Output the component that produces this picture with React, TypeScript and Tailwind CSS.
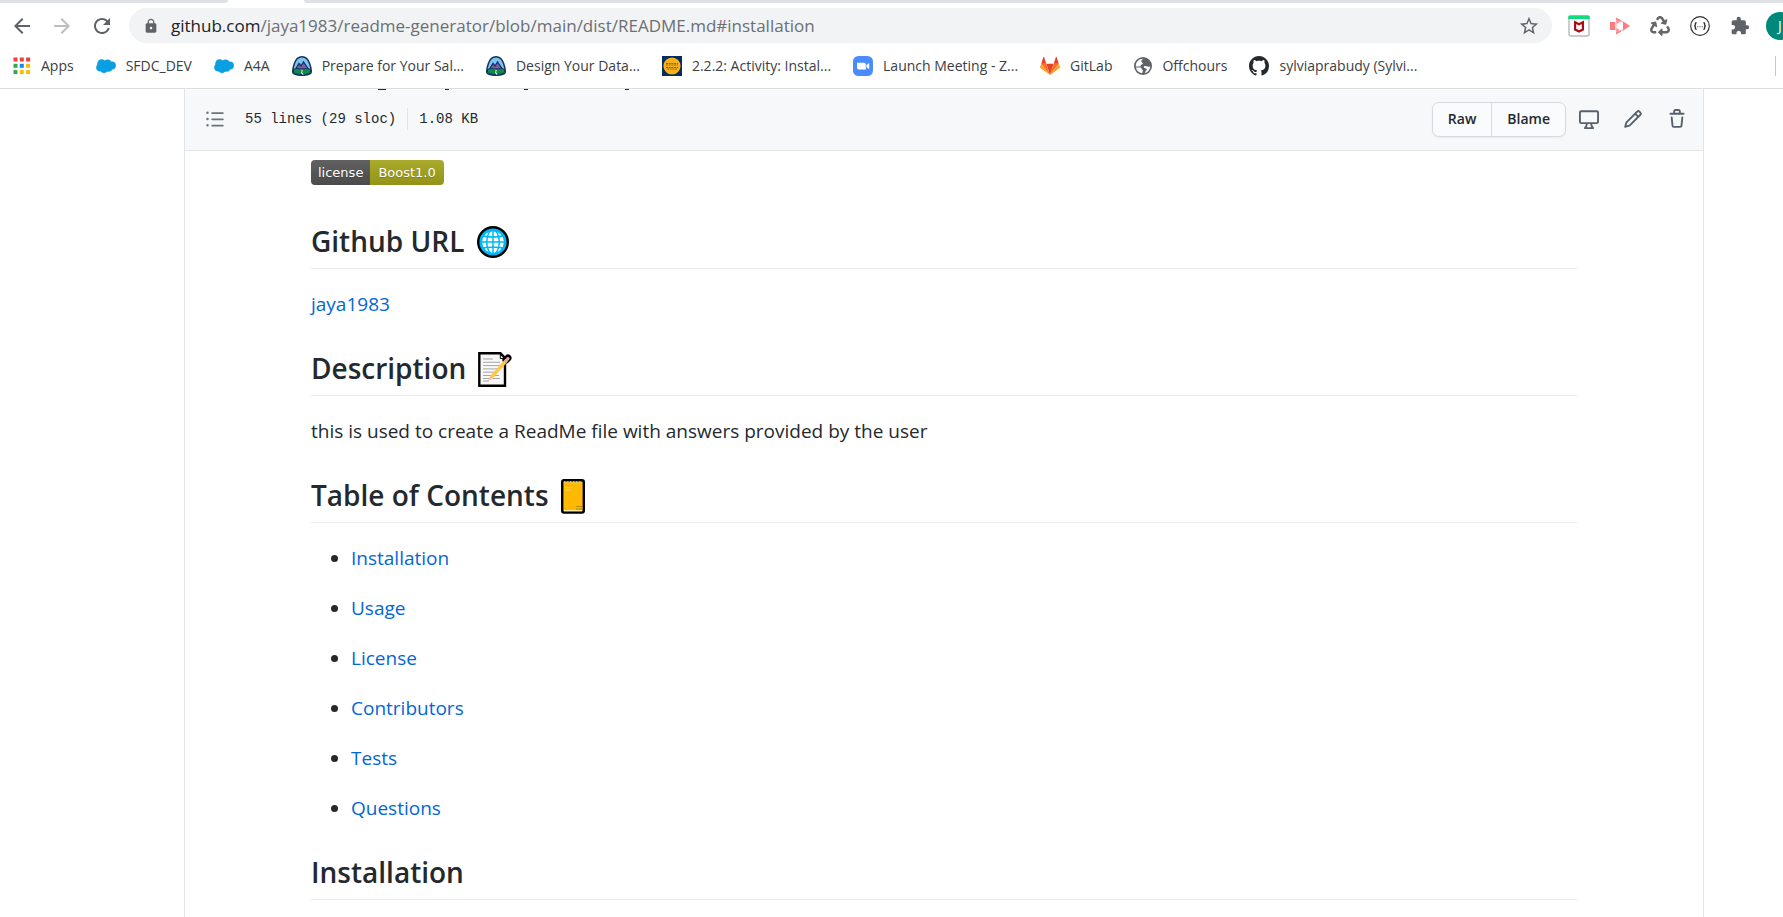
import type { ReactNode } from "react";
import {
  MdArrowBack,
  MdArrowForward,
  MdExtension,
  MdLock,
  MdRefresh,
  MdStarBorder,
} from "react-icons/md";
import { FaRecycle } from "react-icons/fa";

/* ---------- bookmark icons ---------- */

function AppsIcon() {
  const colors = ["#ea4335", "#ea4335", "#ea4335", "#34a853", "#1a86f0", "#fbbc04", "#34a853", "#fbbc04", "#fbbc04"];
  return (
    <svg className="size-[18px]" viewBox="0 0 18 18" aria-hidden="true">
      {colors.map((c, i) => (
        <rect key={i} x={0.5 + (i % 3) * 6.3} y={0.5 + Math.floor(i / 3) * 6.3} width="4" height="4" fill={c} />
      ))}
    </svg>
  );
}

function CloudIcon() {
  return (
    <svg className="size-5" viewBox="0 0 20 20" aria-hidden="true">
      <g fill="#0a9fe0">
        <circle cx="5.6" cy="7.6" r="4.3" />
        <circle cx="4" cy="11.6" r="3.8" />
        <circle cx="11.6" cy="7.4" r="3.8" />
        <circle cx="15.8" cy="9.6" r="4.1" />
        <circle cx="12.4" cy="12" r="3.8" />
        <circle cx="8" cy="12.8" r="4.2" />
      </g>
    </svg>
  );
}

function TrailheadIcon() {
  return (
    <svg className="size-5" viewBox="0 0 20 20" aria-hidden="true">
      <path
        d="M10 .8C14 .8 16.400 4 17.600 7.600 18.500 10.200 19.500 13.500 19.200 16.200 18.900 18.300 14.500 19.300 10 19.300S1.100 18.300.8 16.200C.5 13.500 1.500 10.200 2.400 7.600 3.600 4 6 .8 10 .8z"
        fill="#7cc4f2"
        stroke="#16325c"
        strokeWidth="1.500"
      />
      <path d="M3 14l4-6.500 2 2.500 2.500-4L17 14z" fill="#7e5aa8" stroke="#16325c" strokeWidth="1.300" />
      <path d="M1.500 13.500c3-1.800 5-.6 8.500-.6s5.500-1.200 8.500.6v3c-1.500 1.500-5 2-8.500 2s-7-.5-8.500-2z" fill="#0f8a4d" stroke="#16325c" strokeWidth="1" />
      <path d="M8.500 13.200l2.600 1.500-1.300 1.300 2 2.600H10l-1-2.600 1-1z" fill="#fff" />
    </svg>
  );
}

function ActivityIcon() {
  return (
    <svg className="size-5" viewBox="0 0 20 20" aria-hidden="true">
      <rect width="20" height="20" fill="#062b60" />
      <circle cx="10" cy="10" r="8.600" fill="#fbb216" />
      <path d="M4 7.500h12M4 9h12M4 11.500h12M5 13h10" stroke="#8a6420" strokeWidth="1" strokeDasharray="2 .7" />
    </svg>
  );
}

function ZoomIcon() {
  return (
    <svg className="size-5" viewBox="0 0 20 20" aria-hidden="true">
      <rect width="20" height="20" rx="5.500" fill="#4a8cff" />
      <path d="M4 6.800h7a1.800 1.800 0 0 1 1.800 1.800v4.900h-7A1.800 1.800 0 0 1 4 11.700zM13.400 9l2.800-2.100v6.300L13.400 11.200z" fill="#fff" />
    </svg>
  );
}

function GitLabIcon() {
  return (
    <svg className="size-5" viewBox="0 0 20 20" aria-hidden="true">
      <path d="M10 19l3.700-11.300H6.300z" fill="#e24329" />
      <path d="M10 19L6.300 7.700H1.200z" fill="#fc6d26" />
      <path d="M1.200 7.700L.1 11.100a.8.8 0 0 0 .3.900L10 19z" fill="#fca326" />
      <path d="M1.200 7.700h5.100L4.100 1a.4.4 0 0 0-.7 0z" fill="#e24329" />
      <path d="M10 19l3.700-11.300h5.100z" fill="#fc6d26" />
      <path d="M18.800 7.700l1.100 3.400a.8.8 0 0 1-.3.900L10 19z" fill="#fca326" />
      <path d="M18.800 7.700h-5.100L15.900 1a.4.4 0 0 1 .7 0z" fill="#e24329" />
    </svg>
  );
}

function GlobeIcon() {
  return (
    <svg className="size-[18px]" viewBox="0 0 18 18" aria-hidden="true">
      <circle cx="9" cy="9" r="9" fill="#5f6368" />
      <path
        d="M9.500 1.800C8.300 2.300 7.200 3.100 7.300 4.300c.1 1.200 1.600 1.300 1.500 2.300-.1 1-1.200.9-1.900 1.300-.4.300-.6.900-.5 1.500H1.800C1.600 5 4.900 1.500 9.500 1.800zM2 10.600h4.300c.9 0 1.300.6 1.300 1.300 0 .8 1 .7 1.300 1.200.3.600-.1 1.200-.5 1.600v1.400C5.200 16.200 2.500 13.700 2 10.600zM16.200 9.400c-1.200 0-1.600.5-2.600.2-1-.3-1.600-.9-2.800-.6-1 .3-1.300 1.400-.4 2 .8.500 2.200.3 2.400 1.300.2 1.200-1.300 1.600-1.600 2.500l-.3 1.200c2.900-.8 5.200-3.400 5.300-6.600z"
        fill="#fff"
      />
    </svg>
  );
}

function GitHubIcon() {
  return (
    <svg className="size-5" viewBox="0 0 16 16" fill="#24292e" aria-hidden="true">
      <path d="M8 0C3.580 0 0 3.580 0 8c0 3.540 2.290 6.530 5.470 7.590.4.070.55-.17.55-.38 0-.19-.01-.82-.01-1.490-2.010.37-2.530-.49-2.690-.94-.09-.23-.48-.94-.82-1.130-.28-.15-.68-.52-.01-.53.63-.01 1.080.58 1.230.82.72 1.210 1.870.87 2.330.66.070-.52.28-.87.51-1.070-1.780-.2-3.640-.89-3.640-3.950 0-.87.31-1.590.82-2.150-.08-.2-.36-1.020.08-2.120 0 0 .67-.21 2.200.82.64-.18 1.320-.27 2-.27.68 0 1.360.09 2 .27 1.530-1.040 2.200-.82 2.200-.82.44 1.100.16 1.920.08 2.120.51.56.82 1.270.82 2.150 0 3.070-1.870 3.750-3.650 3.950.29.25.54.73.54 1.480 0 1.070-.01 1.930-.01 2.200 0 .21.15.46.55.38A8.013 8.013 0 0 0 16 8c0-4.420-3.580-8-8-8z" />
    </svg>
  );
}

/* ---------- extension icons ---------- */

function ShieldExtIcon() {
  return (
    <svg className="size-[22px]" viewBox="0 0 22 22" aria-hidden="true">
      <rect x="1" y="1" width="20" height="20" rx="2" fill="#fff" stroke="#b9b9b9" strokeWidth="1.400" />
      <path d="M.3 1.500A1.200 1.200 0 0 1 1.500.5h19a1.200 1.200 0 0 1 1.200 1V4H.3z" fill="#10dc7c" />
      <path d="M7.100 7.200l3.900 2 3.900-2v7.400L11 16.600l-3.900-2z" fill="none" stroke="#a80f14" strokeWidth="2.200" />
    </svg>
  );
}

function CastExtIcon() {
  return (
    <svg className="size-5" viewBox="0 0 20 18" aria-hidden="true">
      <rect x="0" y="5" width="5" height="8" fill="#fb7c80" />
      <path d="M6 .6l5.500 2.900L6.500 7zM6 17.400l5.500-2.900L6.500 11zM13 4.300L20 9l-7 4.700z" fill="#fb7c80" />
      <path d="M6 5v8M6.500 4L13 4.800M6.500 14l6.500-.8" stroke="#fdb5b7" strokeWidth="1.200" fill="none" />
    </svg>
  );
}

function BracesExtIcon() {
  return (
    <svg className="size-5" viewBox="0 0 20 20" fill="none" stroke="#333" aria-hidden="true">
      <circle cx="10" cy="10" r="9.300" strokeWidth="1.200" />
      <path d="M6.600 6.700c-1.400 0-1.200.8-1.200 1.800S5.200 10 4.200 10c1 0 1.200.5 1.200 1.500s-.2 1.800 1.200 1.800M13.400 6.700c1.400 0 1.200.8 1.200 1.800s.2 1.500 1.200 1.500c-1 0-1.200.5-1.200 1.500s.2 1.800-1.200 1.800" strokeWidth="1.400" />
      <path d="M7.300 10.800h5.400" strokeWidth="1" strokeDasharray="1 1.200" />
    </svg>
  );
}

/* ---------- file toolbar icons ---------- */

function Octicon({ d }: { d: string }) {
  return (
    <svg className="size-5" viewBox="0 0 16 16" fill="currentColor" aria-hidden="true">
      <path fillRule="evenodd" d={d} />
    </svg>
  );
}

const octicons = {
  list: "M2 4a1 1 0 100-2 1 1 0 000 2zm3.750-1.500a.75.75 0 000 1.500h8.500a.75.75 0 000-1.500h-8.500zm0 5a.75.75 0 000 1.500h8.500a.75.75 0 000-1.500h-8.500zm0 5a.75.75 0 000 1.500h8.500a.75.75 0 000-1.500h-8.500zM3 8a1 1 0 11-2 0 1 1 0 012 0zm-1 6a1 1 0 100-2 1 1 0 000 2z",
  desktop:
    "M1.750 2.500h12.500a.25.25 0 01.25.25v7.500a.25.25 0 01-.25.25H1.750a.25.25 0 01-.25-.25v-7.500a.25.25 0 01.25-.25zM14.250 1H1.750A1.750 1.750 0 000 2.750v7.500C0 11.216.784 12 1.750 12h3.727c-.1 1.041-.52 1.872-1.292 2.757A.75.75 0 004.750 16h6.500a.75.75 0 00.565-1.243c-.772-.885-1.193-1.716-1.292-2.757h3.727A1.750 1.750 0 0016 10.250v-7.500A1.750 1.750 0 0014.250 1zM9.018 12H6.982a5.720 5.720 0 01-.765 2.500h3.566a5.720 5.720 0 01-.765-2.500z",
  pencil:
    "M11.013 1.427a1.750 1.750 0 012.474 0l1.086 1.086a1.750 1.750 0 010 2.474l-8.610 8.610c-.21.21-.47.364-.756.445l-3.251.93a.75.75 0 01-.927-.928l.929-3.250a1.750 1.750 0 01.445-.758l8.610-8.610zm1.414 1.060a.25.25 0 00-.354 0L10.811 3.750l1.439 1.440 1.263-1.263a.25.25 0 000-.354l-1.086-1.086zM11.189 6.250L9.750 4.810l-6.286 6.287a.25.25 0 00-.064.108l-.558 1.953 1.953-.558a.249.249 0 00.108-.064l6.286-6.286z",
  trash:
    "M6.500 1.750a.25.25 0 01.25-.25h2.500a.25.25 0 01.25.25V3h-3V1.750zm4.500 0V3h2.250a.75.75 0 010 1.500H2.750a.75.75 0 010-1.500H5V1.750C5 .784 5.784 0 6.750 0h2.500C10.216 0 11 .784 11 1.750zM4.496 6.675a.75.75 0 10-1.492.15l.66 6.600A1.750 1.750 0 005.405 15h5.190c.9 0 1.652-.681 1.741-1.576l.66-6.600a.75.75 0 00-1.492-.149l-.66 6.600a.25.25 0 01-.249.225h-5.190a.25.25 0 01-.249-.225l-.66-6.600z",
};

/* ---------- heading pictograms ---------- */

function GlobeEmoji() {
  return (
    <svg className="h-9 w-[34px]" viewBox="0 0 34 36" fill="none" aria-hidden="true">
      <circle cx="17" cy="18" r="14.800" fill="#00b8f5" stroke="#000" strokeWidth="2.400" />
      <circle cx="17" cy="18" r="10.800" fill="#fff" />
      <g stroke="#00b8f5" strokeWidth="1.500">
        <circle cx="17" cy="18" r="11.800" />
        <ellipse cx="17" cy="18" rx="6.300" ry="12" />
        <path d="M17 5v26M4 18h26M6.500 11.500c5 2 16 2 21 0M6.500 24.500c5-2 16-2 21 0" />
      </g>
    </svg>
  );
}

function MemoEmoji() {
  return (
    <svg className="h-9 w-[34px]" viewBox="0 0 34 36" fill="none" aria-hidden="true">
      <path d="M1.300 2.300H22.500L27 7v27.700H1.300z" fill="#f8f8f8" stroke="#000" strokeWidth="2.400" />
      <path d="M22.300 2.500V7.500H27" stroke="#000" strokeWidth="1" />
      <path d="M5 8h10M5 11.300h17M5 14.600h18M5 17.900h17M5 21.200h13M5 24.500h16M5 27.500h6M5 30h6M15 27.500h7" stroke="#a6a6a6" strokeWidth="1" />
      <path d="M28 9L30 7" stroke="#000" strokeWidth="7" strokeLinecap="round" />
      <path d="M13.200 26.500L27.500 10.500" stroke="#ffc83d" strokeWidth="3.400" />
      <path d="M27 10.800L28.800 9" stroke="#b8b8b8" strokeWidth="3.400" />
      <path d="M28.800 9L30 7.500" stroke="#f2a5a0" strokeWidth="3" strokeLinecap="round" />
      <path d="M12.200 25l2.700 2.500-5 2.500z" fill="#f3b9a2" />
    </svg>
  );
}

function LedgerEmoji() {
  return (
    <svg className="h-9 w-6" viewBox="0 0 24 36" fill="none" aria-hidden="true">
      <rect x="1.200" y="2.200" width="21.600" height="32.400" rx="1.800" fill="#ffb900" stroke="#000" strokeWidth="2.400" />
      <path d="M3 32.600h18" stroke="#fff0c0" strokeWidth="1" />
      <path d="M3 4.600h18" stroke="#d8c48a" strokeWidth="2.800" strokeDasharray="1.500 1.500" />
      <path d="M4 9.500h7M4 12h6" stroke="#e6cf80" strokeWidth="1" />
      <path d="M15 28.500h6M15 31h6" stroke="#b88600" strokeWidth="1.200" />
    </svg>
  );
}

/* ---------- data ---------- */

const bookmarks: { label: string; icon: ReactNode }[] = [
  { label: "SFDC_DEV", icon: <CloudIcon /> },
  { label: "A4A", icon: <CloudIcon /> },
  { label: "Prepare for Your Sal...", icon: <TrailheadIcon /> },
  { label: "Design Your Data...", icon: <TrailheadIcon /> },
  { label: "2.2.2: Activity: Instal...", icon: <ActivityIcon /> },
  { label: "Launch Meeting - Z...", icon: <ZoomIcon /> },
  { label: "GitLab", icon: <GitLabIcon /> },
  { label: "Offchours", icon: <GlobeIcon /> },
  { label: "sylviaprabudy (Sylvi...", icon: <GitHubIcon /> },
];

const contents = ["Installation", "Usage", "License", "Contributors", "Tests", "Questions"];

function Heading({ children, icon, id }: { children: string; icon?: ReactNode; id?: string }) {
  return (
    <h2 id={id} className="mt-[30px] mb-5 flex h-[47px] gap-3 border-b border-[#eaecef] text-[28px] leading-[38px] font-semibold whitespace-nowrap">
      {children}
      {icon && <span className="pt-[2px]">{icon}</span>}
    </h2>
  );
}

function IconButton({ label, children }: { label: string; children: ReactNode }) {
  return (
    <button type="button" aria-label={label} className="flex size-5 items-center justify-center">
      {children}
    </button>
  );
}

/* ---------- browser chrome ---------- */

function BrowserBar() {
  return (
    <header className="border-b border-[#dadce0] bg-white">
      <div className="flex h-[3px] bg-white">
        <div className="w-[228px] rounded-br-lg bg-[#dee1e6]" />
        <div className="w-[76px]" />
        <div className="grow rounded-bl-lg bg-[#dee1e6]" />
      </div>

      <div className="flex items-center overflow-hidden pt-[5px]">
        <nav aria-label="Navigation" className="flex w-[129px] shrink-0 items-center gap-4 pl-[10px] text-[#5f6368]">
          <button type="button" aria-label="Back">
            <MdArrowBack className="size-6" />
          </button>
          <button type="button" aria-label="Forward" className="text-[#bcbec1]">
            <MdArrowForward className="size-6" />
          </button>
          <button type="button" aria-label="Reload">
            <MdRefresh className="size-6" />
          </button>
        </nav>

        <div className="flex h-[35px] min-w-0 grow items-center rounded-full bg-[#f1f3f4] pr-3 pl-[14px]">
          <MdLock className="size-4 shrink-0 text-[#5f6368]" />
          <a href="#installation" className="ml-3 grow truncate text-[17px] leading-[26px] text-[#6b6f74]">
            <span className="text-[#202124]">github.com</span>
            /jaya1983/readme-generator/blob/main/dist/README.md#installation
          </a>
          <button type="button" aria-label="Bookmark this tab">
            <MdStarBorder className="size-[22px] text-[#5f6368]" />
          </button>
        </div>

        <div className="flex w-[231px] shrink-0 items-center gap-5 pl-4">
          <button type="button" aria-label="Web protection">
            <ShieldExtIcon />
          </button>
          <button type="button" aria-label="Screen recorder">
            <CastExtIcon />
          </button>
          <button type="button" aria-label="Recycle">
            <FaRecycle className="size-5 text-[#666]" />
          </button>
          <button type="button" aria-label="JSON viewer">
            <BracesExtIcon />
          </button>
          <button type="button" aria-label="Extensions">
            <MdExtension className="size-5 text-[#5f6368]" />
          </button>
          <button
            type="button"
            aria-label="Profile"
            className="-ml-1 flex size-7 shrink-0 items-center justify-center rounded-full bg-[#00897b] text-sm text-white"
          >
            J
          </button>
        </div>
      </div>

      <nav aria-label="Bookmarks" className="flex h-[45px] items-center gap-[22px] overflow-hidden pl-[13px] text-sm leading-5 whitespace-nowrap text-[#3c4043]">
        <a href="#apps" className="flex items-center gap-[10px]">
          <AppsIcon />
          Apps
        </a>
        {bookmarks.map((b) => (
          <a key={b.label} href="#bookmark" className="flex items-center gap-[10px]">
            {b.icon}
            {b.label}
          </a>
        ))}
        <div className="mr-[7px] ml-auto h-5 w-px bg-[#c6c8cb]" />
      </nav>
    </header>
  );
}

/* ---------- page ---------- */

function FileHeader() {
  return (
    <div className="flex h-[61px] items-center border-b border-[#e1e4e8] bg-[#f6f8fa] pr-4 pb-[2px] pl-5">
      <button type="button" aria-label="Table of contents" className="text-[#6a737d]">
        <Octicon d={octicons.list} />
      </button>
      <div className="ml-5 flex items-center font-['Liberation_Mono',monospace] text-sm leading-[22px]">
        <span>55 lines (29 sloc)</span>
        <span className="mx-[11px] h-[22px] w-px bg-[#e1e4e8]" />
        <span>1.08 KB</span>
      </div>
      <div className="ml-auto flex items-center text-[#586069]">
        <div className="mr-[13px] flex h-[35px] rounded-[7px] border border-[#d7dadd] bg-[#fafbfc] text-sm font-semibold text-[#24292e] shadow-xs">
          <button type="button" className="border-r border-[#d7dadd] px-[15px]">
            Raw
          </button>
          <button type="button" className="px-[15px]">
            Blame
          </button>
        </div>
        <div className="flex items-center gap-6">
          <IconButton label="Open in desktop">
            <Octicon d={octicons.desktop} />
          </IconButton>
          <IconButton label="Edit this file">
            <Octicon d={octicons.pencil} />
          </IconButton>
          <IconButton label="Delete this file">
            <Octicon d={octicons.trash} />
          </IconButton>
        </div>
      </div>
    </div>
  );
}

/* Descenders of the page title that has scrolled under the sticky file header. */
function ScrolledTitleEdge() {
  return (
    <svg className="block h-px w-full" aria-hidden="true">
      <path d="M193 .5h8M260 .5h4M339 .5h4M440 .5h4" stroke="#24292e" />
    </svg>
  );
}

export default function App() {
  return (
    <div className="flex h-screen flex-col overflow-hidden bg-white font-['Open_Sans','Noto_Sans',sans-serif] text-[#24292e]">
      <BrowserBar />
      <main className="mr-[79px] ml-[184px] grow border-x border-[#e1e4e8]">
        <ScrolledTitleEdge />
        <FileHeader />
        <article className="mx-auto max-w-[1266px] pt-[9px] text-[19px] leading-[30px]">
          <a
            href="#license"
            className="flex h-[25px] w-fit overflow-hidden rounded-sm font-['DejaVu_Sans',sans-serif] text-[13px] leading-[25px] text-white text-shadow-xs"
          >
            <span className="bg-linear-to-b from-[#616161] to-[#4b4b4b] px-[7px]">license</span>
            <span className="bg-linear-to-b from-[#aaab2b] to-[#929318] px-2">Boost1.0</span>
          </a>

          <div className="pt-[7px]">
            <Heading icon={<GlobeEmoji />}>Github URL</Heading>
            <p>
              <a href="#jaya1983" className="text-[#0366d6]">
                jaya1983
              </a>
            </p>

            <Heading icon={<MemoEmoji />}>Description</Heading>
            <p>this is used to create a ReadMe file with answers provided by the user</p>

            <Heading icon={<LedgerEmoji />}>Table of Contents</Heading>
            <ul className="flex list-disc flex-col gap-5 pl-10">
              {contents.map((item) => (
                <li key={item}>
                  <a href={"#" + item.toLowerCase()} className="text-[#0366d6]">
                    {item}
                  </a>
                </li>
              ))}
            </ul>

            <Heading id="installation">Installation</Heading>
          </div>
        </article>
      </main>
    </div>
  );
}
